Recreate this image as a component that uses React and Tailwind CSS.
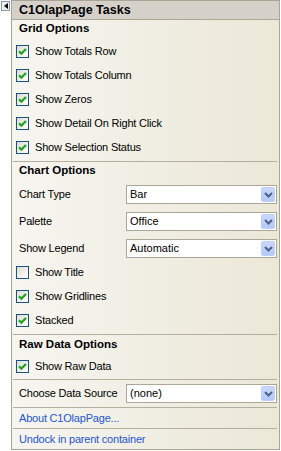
import React from 'react';

const font = "font-['Liberation_Sans',Arial,sans-serif]";

function Check({ checked }) {
  return (
    <span className="w-[13px] h-[13px] border border-[#1c5180] bg-gradient-to-br from-[#dedcd3] to-white flex items-center justify-center shrink-0">
      {checked && (
        <svg width="9" height="9" viewBox="0 0 9 9">
          <path d="M1 4.2 L3.4 6.6 L8 2" stroke="#21a121" strokeWidth="2.2" fill="none" />
        </svg>
      )}
    </span>
  );
}

function CheckRow({ label, checked = true }) {
  return (
    <div className="h-[24px] flex items-center pl-[4px] gap-[6px]">
      <Check checked={checked} />
      <span className="text-[11px] tracking-[-0.2px] text-black">{label}</span>
    </div>
  );
}

function Heading({ children, h = 'h-[18px]' }) {
  return (
    <div className={`${h} flex items-center pl-[7px] text-[11.5px] font-bold text-black`}>{children}</div>
  );
}

function Divider({ top = 'mt-[2px]' }) {
  return <div className={`${top} h-px ml-px mr-[2px] bg-[#b3b0a2]`}></div>;
}

function Select({ value }) {
  return (
    <div className="w-[151px] h-[19px] border border-[#aca899] bg-white flex items-center justify-between">
      <span className="pl-[3px] text-[11px] text-black">{value}</span>
      <span className="w-[14px] h-[15px] mr-px rounded-[2px] bg-gradient-to-b from-[#cad8fc] to-[#b5c8f7] border border-[#bccffa] flex items-center justify-center">
        <svg width="9" height="6" viewBox="0 0 9 6">
          <path d="M1 1 L4.5 4.5 L8 1" stroke="#4d6185" strokeWidth="2" fill="none" />
        </svg>
      </span>
    </div>
  );
}

function SelectRow({ label, value, h = 'h-[27px]' }) {
  return (
    <div className={`${h} flex items-start pt-[4px] pl-[7px]`}>
      <span className="w-[107px] h-[19px] flex items-center text-[11px] tracking-[-0.2px] text-black">{label}</span>
      <Select value={value} />
    </div>
  );
}

export default function App() {
  return (
    <div className={`w-[281px] h-[451px] bg-white flex ${font}`}>
      {/* collapse arrow */}
      <div className="w-[11px] shrink-0">
        <div className="ml-px mt-px w-[9px] h-[10px] border border-[#7f9db9] bg-[#f1efe6] flex items-center justify-center">
          <svg width="4" height="6" viewBox="0 0 4 6">
            <path d="M4 0 L0 3 L4 6 Z" fill="#000" />
          </svg>
        </div>
      </div>

      <div className="w-[269px] h-[450px] border border-[#a8a596] flex flex-col">
        <div className="h-[19px] bg-[#d5d1c9] border-b border-[#aca899] flex items-center pl-[7px] text-[12.5px] font-bold text-black">
          C1OlapPage Tasks
        </div>

        <div className="flex-1 bg-gradient-to-r from-[#f6f5f0] to-[#ebe8d7] flex flex-col">
          <Heading>Grid Options</Heading>
          <div className="mt-px">
            <CheckRow label="Show Totals Row" />
            <CheckRow label="Show Totals Column" />
            <CheckRow label="Show Zeros" />
            <CheckRow label="Show Detail On Right Click" />
            <CheckRow label="Show Selection Status" />
          </div>
          <Divider />

          <Heading>Chart Options</Heading>
          <div className="mt-px">
            <SelectRow label="Chart Type" value="Bar" />
            <SelectRow label="Palette" value="Office" />
            <SelectRow label="Show Legend" value="Automatic" h="h-[25px]" />
          </div>
          <CheckRow label="Show Title" checked={false} />
          <CheckRow label="Show Gridlines" />
          <CheckRow label="Stacked" />
          <Divider />

          <Heading h="h-[19px]">Raw Data Options</Heading>
          <CheckRow label="Show Raw Data" />
          <Divider top="mt-px" />

          <SelectRow label="Choose Data Source" value="(none)" />
          <Divider top="mt-0" />

          <div className="h-[20px] flex items-center pl-[7px] text-[11px] tracking-[-0.2px] text-[#1f55d6]">
            About C1OlapPage...
          </div>
          <Divider top="mt-0" />
          <div className="h-[20px] flex items-center pl-[7px] text-[11px] tracking-[-0.2px] text-[#1f55d6]">
            Undock in parent container
          </div>
        </div>
      </div>
    </div>
  );
}
